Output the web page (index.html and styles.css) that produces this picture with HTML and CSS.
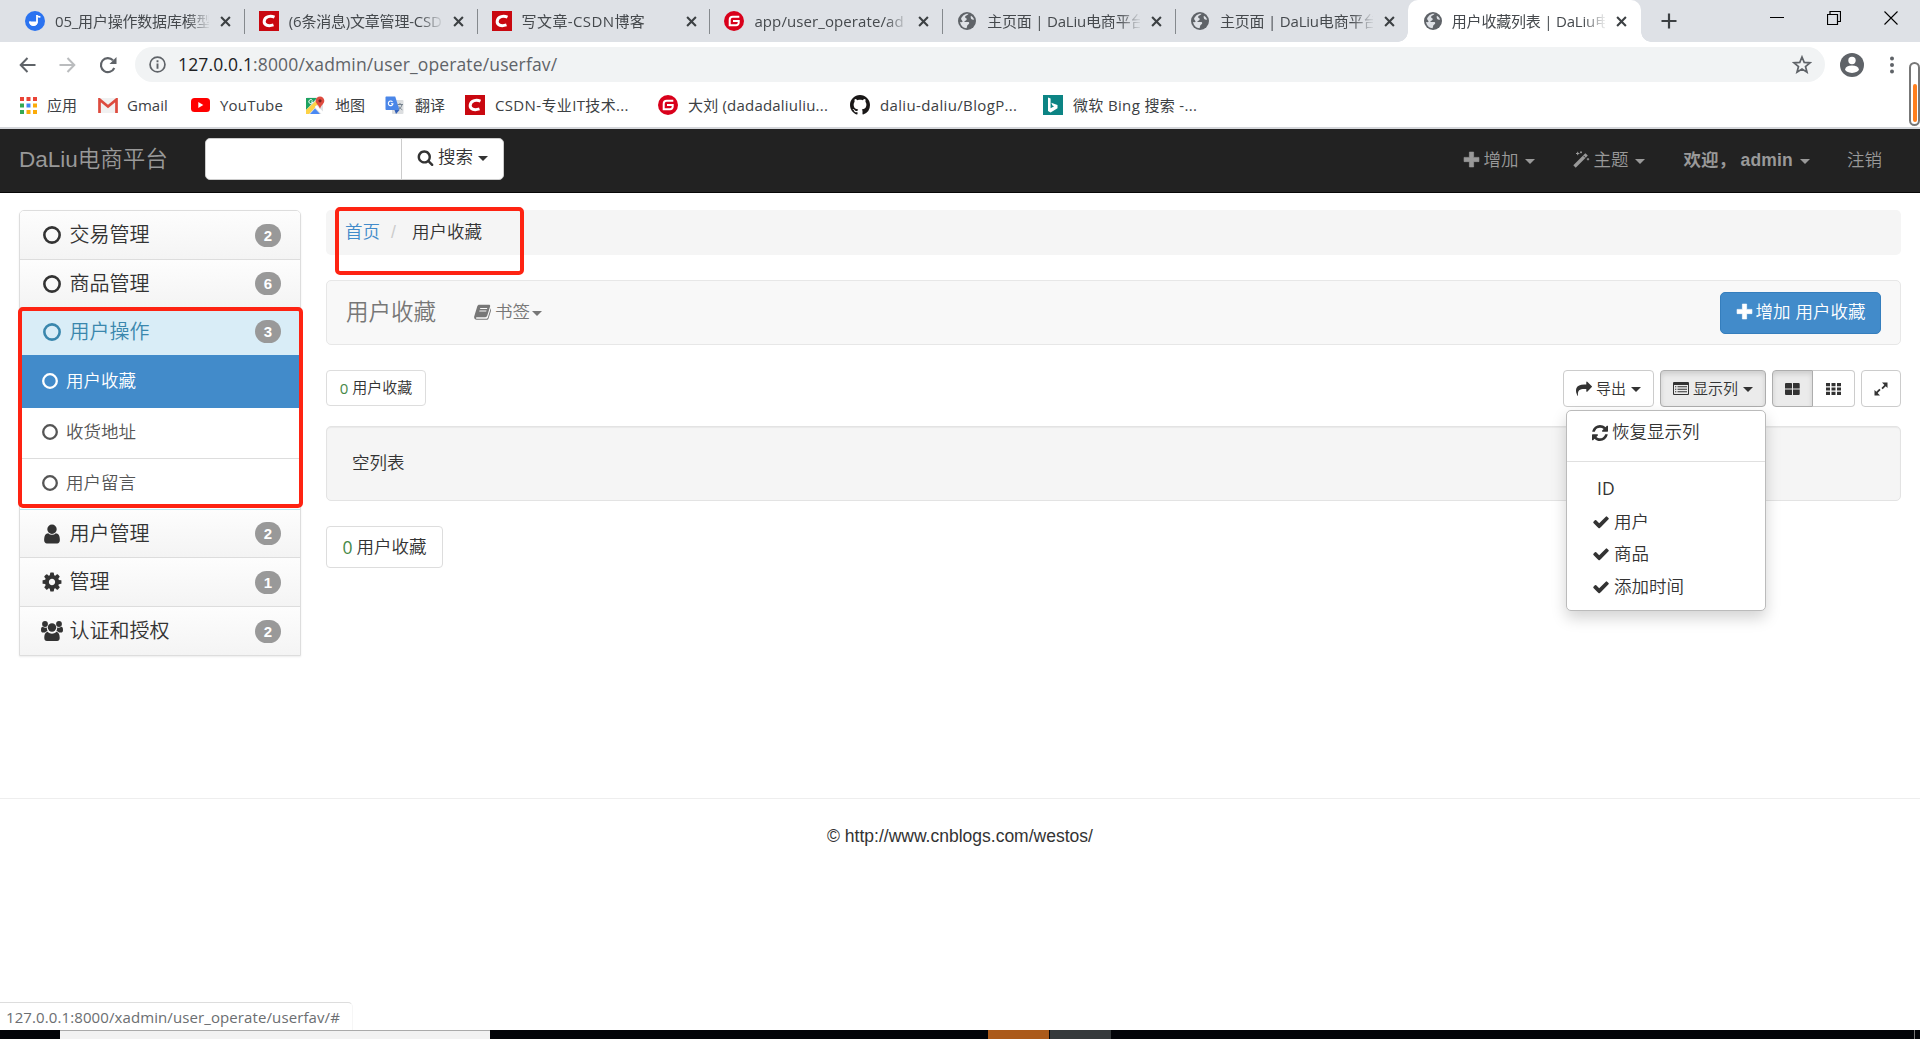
FILE: index.html
```html
<!DOCTYPE html>
<html lang="zh-CN">
<head>
<meta charset="utf-8">
<title>用户收藏列表 | DaLiu电商平台</title>
<link rel="stylesheet" href="styles.css">
</head>
<body>
<svg class="defs" width="0" height="0">
  <symbol id="x" viewBox="0 0 10 10"><path d="M1 1l8 8M9 1L1 9" stroke="#3c4043" stroke-width="1.9"/></symbol>
  <symbol id="note" viewBox="0 0 20 20"><circle cx="10" cy="10" r="10" fill="#2b73f0"/><path d="M11.2 4c1.2.8 3 1 4.200.900v1.800c-1 .2-2 0-2.700-.400" fill="#fff"/><path d="M12 4v6.500a3.600 3.600 0 1 1-7.200 0" fill="none" stroke="#fff" stroke-width="1.800"/><path d="M4.500 10.500h8.400a4.200 4.200 0 0 1-8.400 0z" fill="#fff"/></symbol>
  <symbol id="csdn" viewBox="0 0 20 20"><path d="M0 0h20v20H0z" fill="#c90810"/><path d="M15.500 6.200C12 4.700 5.800 4.800 5.200 10.200c-.4 4.300 4.300 5.300 9.300 3.700" fill="none" stroke="#fff" stroke-width="3"/></symbol>
  <symbol id="gitee" viewBox="0 0 20 20"><circle cx="10" cy="10" r="10" fill="#d9001b"/><path d="M15.300 5.700H8.700a3 3 0 0 0-3 3v5.600h6.500a2.500 2.500 0 0 0 2.500-2.500v-1.700H9" fill="none" stroke="#fff" stroke-width="2"/></symbol>
  <symbol id="globe" viewBox="0 0 20 20"><circle cx="10" cy="10" r="9" fill="#5f6368"/><path d="M11.500 2.800c-.5 1.700-3.800 1.600-3.300 3.700.3 1 2 .5 1.500 2-.5 1.300-2.200 1-2.500 2.500h3.500c2.300 0 1.600 2 .5 2.500-1.500.8-.7 2.200-1.700 3.700-3 0-6-2.700-6.400-6.200.8 0 1.800.5 2.600-.5L4 8C5 5 8 2.300 11.500 2.800zM14 4.800c1.300.7 2.500 2 3 3.700-1.500.8-2.800-.3-3.200-1.500-.3-1-.2-1.600.2-2.200z" fill="#dee1e6"/></symbol>
  <symbol id="github" viewBox="0 0 16 16"><path fill="#191717" d="M8 0C3.580 0 0 3.580 0 8c0 3.540 2.290 6.530 5.470 7.590.4.070.550-.170.550-.380 0-.190-.010-.820-.010-1.490-2.010.370-2.530-.490-2.690-.940-.090-.230-.480-.940-.820-1.130-.280-.150-.680-.520-.010-.530.630-.010 1.080.580 1.230.820.720 1.210 1.870.870 2.330.660.070-.520.280-.870.510-1.070-1.780-.200-3.640-.890-3.640-3.950 0-.870.310-1.590.820-2.150-.080-.200-.360-1.020.080-2.120 0 0 .670-.210 2.200.820.640-.180 1.320-.270 2-.270s1.360.090 2 .270c1.530-1.040 2.200-.820 2.200-.820.440 1.100.160 1.920.080 2.120.510.560.820 1.270.820 2.150 0 3.070-1.870 3.750-3.650 3.950.290.250.540.730.540 1.480 0 1.070-.010 1.930-.010 2.200 0 .210.150.460.550.380A8.010 8.010 0 0 0 16 8c0-4.420-3.580-8-8-8z"/></symbol>
  <symbol id="bing" viewBox="0 0 20 20"><path d="M0 0h20v20H0z" fill="#0c8484"/><path d="M5 2.500l2.600 1v9.800l3.500-2-1.700-.8-1.100-2.700 6.200 2.200v3.200L7.600 17.500 5 16z" fill="#fff"/></symbol>
  <symbol id="caret" viewBox="0 0 10 5"><path d="M0 0h10L5 5z" fill="currentColor"/></symbol>
  <symbol id="ring" viewBox="0 0 16 16"><circle cx="8" cy="8" r="6.800" fill="none" stroke="currentColor" stroke-width="2.300"/></symbol>
  <symbol id="plus" viewBox="0 0 16 16"><path d="M6 1h4v5h5v4h-5v5H6v-5H1V6h5z" fill="currentColor" stroke="currentColor" stroke-width=".6" stroke-linejoin="round"/></symbol>
  <symbol id="search" viewBox="0 0 1792 1792"><path fill="currentColor" d="M1216 832q0-185-131.500-316.500t-316.500-131.500-316.500 131.500-131.500 316.500 131.500 316.500 316.500 131.500 316.500-131.500 131.500-316.500zm512 832q0 52-38 90t-90 38q-54 0-90-38l-343-342q-179 124-399 124-143 0-273.500-55.500t-225-150-150-225-55.500-273.500 55.500-273.500 150-225 225-150 273.500-55.500 273.500 55.500 225 150 150 225 55.500 273.500q0 220-124 399l343 343q37 37 37 90z"/></symbol>
  <symbol id="user" viewBox="0 0 1792 1792"><path fill="currentColor" d="M1536 1399q0 109-62.500 187t-150.500 78h-854q-88 0-150.500-78t-62.500-187q0-85 8.500-160.500t31.500-152 58.500-131 94-89 134.500-34.500q131 128 313 128t313-128q76 0 134.500 34.500t94 89 58.500 131 31.500 152 8.500 160.500zm-256-887q0 159-112.500 271.500t-271.500 112.500-271.500-112.500-112.500-271.500 112.500-271.500 271.500-112.500 271.500 112.500 112.500 271.500z"/></symbol>
  <symbol id="cog" viewBox="0 0 1792 1792"><path fill="currentColor" d="M1152 896q0-106-75-181t-181-75-181 75-75 181 75 181 181 75 181-75 75-181zm512-109v222q0 12-8 23t-20 13l-185 28q-19 54-39 91 35 50 107 138 10 12 10 25t-9 23q-27 37-99 108t-94 71q-12 0-26-9l-138-108q-44 23-91 38-16 136-29 186-7 28-36 28h-222q-14 0-24.500-8.500t-11.500-21.500l-28-184q-49-16-90-37l-141 107q-10 9-25 9-14 0-25-11-126-114-165-168-7-10-7-23 0-12 8-23 15-21 51-66.500t54-70.500q-27-50-41-99l-183-27q-13-2-21-12.500t-8-23.500v-222q0-12 8-23t19-13l186-28q14-46 39-92-40-57-107-138-10-12-10-24 0-10 9-23 26-36 98.500-107.500t94.500-71.500q13 0 26 10l138 107q44-23 91-38 16-136 29-186 7-28 36-28h222q14 0 24.500 8.500t11.500 21.500l28 184q49 16 90 37l142-107q9-9 24-9 13 0 25 10 129 119 165 170 7 8 7 22 0 12-8 23-15 21-51 66.500t-54 70.500q26 50 41 98l183 28q13 2 21 12.500t8 23.500z"/></symbol>
  <symbol id="group" viewBox="0 0 22 22"><g fill="currentColor"><circle cx="4" cy="4" r="2.900"/><circle cx="18" cy="4" r="2.900"/><circle cx="11" cy="7.500" r="4.200"/><path d="M0 10c0-2 .6-3.200 1.700-3.200 1.500 1 3 1.200 4.200.6-.2 1.800.3 3 1 3.900-1.300 0-2.200.5-2.900 1.300H2C.8 12.600 0 11.800 0 10zM22 10c0-2-.6-3.200-1.700-3.200-1.500 1-3 1.200-4.200.6.2 1.800-.3 3-1 3.900 1.300 0 2.200.5 2.900 1.300h2c1.200 0 2-.8 2-2.600zM3.300 18c0-3.500 1-6 3.500-6 2.500 2.200 5.900 2.200 8.400 0 2.500 0 3.500 2.500 3.500 6 0 2-1 3-2.600 3H5.900c-1.600 0-2.600-1-2.600-3z"/></g></symbol>
  <symbol id="check" viewBox="0 0 1792 1792"><path fill="currentColor" d="M1671 566q0 40-28 68l-724 724-136 136q-28 28-68 28t-68-28l-136-136-362-362q-28-28-28-68t28-68l136-136q28-28 68-28t68 28l294 295 656-657q28-28 68-28t68 28l136 136q28 28 28 68z"/></symbol>
  <symbol id="refresh" viewBox="128 128 1536 1536"><path fill="currentColor" d="M1639 1056q0 5-1 7-64 268-268 434.500t-478 166.500q-146 0-282.500-55t-243.500-157l-129 129q-19 19-45 19t-45-19-19-45v-448q0-26 19-45t45-19h448q26 0 45 19t19 45-19 45l-137 137q71 66 161 102t187 36q134 0 250-65t186-179q11-17 53-117 8-23 30-23h192q13 0 22.500 9.500t9.500 22.500zm25-800v448q0 26-19 45t-45 19h-448q-26 0-45-19t-19-45 19-45l138-138q-148-137-349-137-134 0-250 65t-186 179q-11 17-53 117-8 23-30 23h-199q-13 0-22.500-9.500t-9.500-22.500v-7q65-268 270-434.500t480-166.500q146 0 284 55.500t245 156.500l130-129q19-19 45-19t45 19 19 45z"/></symbol>
  <symbol id="share" viewBox="0 0 1792 1792"><path fill="currentColor" d="M1792 640q0 26-19 45l-512 512q-19 19-45 19t-45-19-19-45v-256h-224q-98 0-175.500 6t-154 21.500-133 42.500-105.500 69.500-80 101-48.500 138.500-17.500 181q0 55 5 123 0 6 2.500 23.500t2.500 26.500q0 15-8.500 25t-23.500 10q-16 0-28-17-7-9-13-22t-13.500-30-10.500-24q-127-285-127-451 0-199 53-333 162-403 875-403h224v-256q0-26 19-45t45-19 45 19l512 512q19 19 19 45z"/></symbol>
  <symbol id="magic" viewBox="0 0 17 17"><path d="M1.500 15.500L12 5l1.600-1.600" stroke="currentColor" stroke-width="3.400" fill="none"/><path d="M10.500 4.800l1.800 1.800" stroke="#222" stroke-width=".9"/><path d="M3 2.500h3.400M4.700.8v3.400M8 .3v2M7 1.300h2M15 7v2.400M13.800 8.200h2.400" stroke="currentColor" stroke-width="1"/></symbol>
  <symbol id="book" viewBox="0 0 17 16"><path fill="currentColor" fill-rule="evenodd" d="M5.300.7h9.600c1 0 1.500.8 1.200 1.800l-2.900 9.300c-.3.900-1 1.400-1.900 1.400H3c-.8 0-1.300.4-1 1 .2.500.6.600 1.200.6h8.900c.9 0 1.500-.3 1.800-1.200l2.800-9.200c.8.500.7 1.300.4 2.100l-2.500 7.700c-.3 1-1.100 1.500-2 1.500H2.700C1 15.700-.2 14.200.2 12.600L3.300 2.300C3.600 1.300 4.300.7 5.300.700zM6.300 4l-.3.900h7l.3-.9zM5.500 6.600l-.3.900h7l.3-.9z"/></symbol>
  <symbol id="list" viewBox="0 0 16 13"><path fill="currentColor" fill-rule="evenodd" d="M1.300 0h13.400C15.500 0 16 .5 16 1.300v10.400c0 .8-.5 1.300-1.300 1.300H1.300C.5 13 0 12.500 0 11.700V1.300C0 .5.500 0 1.300 0zM1 3v8.500c0 .3.200.5.500.5h13c.3 0 .5-.2.500-.5V3z"/><path d="M2 4.700h1.300M2 7.200h1.300M2 9.700h1.300M4.500 4.700H14M4.500 7.200H14M4.500 9.700H14" stroke="currentColor" stroke-width="1.100"/></symbol>
  <symbol id="large" viewBox="0 0 15 12"><path fill="currentColor" d="M1 0h5.200q.8 0 .8.800V5.500H0V1q0-1 1-1zM8 0h5.700q1 0 1 1v4.500H8zM0 6.500h7V12H1q-1 0-1-1zM8 6.500h6.700V11q0 1-1 1H8z"/></symbol>
  <symbol id="th" viewBox="0 0 15 12"><path fill="currentColor" d="M0 0h4v3.200H0zM5.500 0h4v3.200h-4zM11 0h4v3.200h-4zM0 4.400h4v3.200H0zM5.500 4.400h4v3.200h-4zM11 4.400h4v3.200h-4zM0 8.800h4V12H0zM5.500 8.800h4V12h-4zM11 8.800h4V12h-4z"/></symbol>
  <symbol id="expand" viewBox="0 0 14 14"><path fill="currentColor" d="M8 .5h5.500V6l-1.800-1.800-3 3-1.300-1.300 3-3zM6 13.500H.5V8l1.800 1.800 3-3 1.300 1.300-3 3z"/></symbol>
</svg>

<div class="tabs">
  <div class="tab"><svg class="fav"><use href="#note"/></svg><span class="title">05_用户操作数据库模型</span><svg class="close"><use href="#x"/></svg></div>
  <div class="tab"><svg class="fav"><use href="#csdn"/></svg><span class="title">(6条消息)文章管理-CSD</span><svg class="close"><use href="#x"/></svg></div>
  <div class="tab"><svg class="fav"><use href="#csdn"/></svg><span class="title blog">写文章-CSDN博客</span><svg class="close"><use href="#x"/></svg></div>
  <div class="tab"><svg class="fav"><use href="#gitee"/></svg><span class="title narrow">app/user_operate/ad</span><svg class="close"><use href="#x"/></svg></div>
  <div class="tab"><svg class="fav"><use href="#globe"/></svg><span class="title">主页面 | DaLiu电商平台</span><svg class="close"><use href="#x"/></svg></div>
  <div class="tab last"><svg class="fav"><use href="#globe"/></svg><span class="title">主页面 | DaLiu电商平台</span><svg class="close"><use href="#x"/></svg></div>
  <div class="tab active"><svg class="fav"><use href="#globe"/></svg><span class="title">用户收藏列表 | DaLiu电</span><svg class="close"><use href="#x"/></svg></div>
  <svg class="newtab" viewBox="0 0 16 16"><path d="M8 .5v15M.5 8h15" stroke="#3c4043" stroke-width="2.200"/></svg>
  <div class="winctl">
    <svg width="14" height="14"><path d="M0 6.500h14" stroke="#000"/></svg>
    <svg width="14" height="14"><path d="M.5 3.500h10v10H.5zM3 3V.500h10.500v10H11" fill="none" stroke="#000" stroke-width="1.200"/></svg>
    <svg width="14" height="14"><path d="M.5.500l13 13M13.500.500l-13 13" stroke="#000" stroke-width="1.100"/></svg>
  </div>
</div>

<div class="toolbar">
  <svg class="back" viewBox="0 0 16 16"><path d="M16 8H1.500M8 1L1.200 8 8 15" fill="none" stroke="#5f6368" stroke-width="2"/></svg>
  <svg class="fwd" viewBox="0 0 16 16"><path d="M0 8h14.500M8 1l6.800 7L8 15" fill="none" stroke="#babcbe" stroke-width="2"/></svg>
  <svg class="reload" viewBox="0 0 18 18"><path d="M15.300 12A7 7 0 1 1 14 4.300" fill="none" stroke="#5f6368" stroke-width="2.100"/><path d="M17.500 1v7h-7z" fill="#5f6368"/></svg>
  <div class="omnibox">
    <svg class="info" viewBox="0 0 16 16"><circle cx="8" cy="8" r="7" fill="none" stroke="#5f6368" stroke-width="1.600"/><path d="M8 7v5M8 4v1.800" stroke="#5f6368" stroke-width="1.800"/></svg>
    <span class="url"><b>127.0.0.1</b>:8000/xadmin/user_operate/userfav/</span>
    <svg class="star" viewBox="0 0 20 20"><path d="M10 2l2.200 5.400 5.800.4-4.500 3.700 1.500 5.700-5-3.100-5 3.100 1.500-5.700L2 7.800l5.800-.4z" fill="none" stroke="#5f6368" stroke-width="1.700"/></svg>
  </div>
  <svg class="avatar" viewBox="0 0 24 24"><circle cx="12" cy="12" r="12" fill="#5f6368"/><circle cx="12" cy="7.500" r="3.700" fill="#fff"/><ellipse cx="12" cy="16.200" rx="6.800" ry="3.700" fill="#fff"/></svg>
  <svg class="dots" viewBox="0 0 4 18"><g fill="#5f6368"><circle cx="2" cy="2.500" r="2"/><circle cx="2" cy="9" r="2"/><circle cx="2" cy="15.500" r="2"/></g></svg>
</div>

<div class="bookmarks">
  <div class="bm b1"><svg width="17" height="17" viewBox="0 0 17 17"><path d="M0 0h4v4H0zM6.500 0h4v4h-4zM13 0h4v4h-4z" fill="#ea4335"/><path d="M0 6.500h4v4H0z" fill="#34a853"/><path d="M6.500 6.500h4v4h-4z" fill="#4285f4"/><path d="M13 6.500h4v4h-4zM6.500 13h4v4h-4zM13 13h4v4h-4z" fill="#fbab09"/><path d="M0 13h4v4H0z" fill="#34a853"/></svg><span>应用</span></div>
  <div class="bm b2"><svg width="20" height="15" viewBox="0 0 20 15"><path d="M1 0h18v15H1z" fill="#f1f1f1"/><path d="M1.500 15V1.500L10 8.500l8.500-7V15" fill="none" stroke="#dd4b3e" stroke-width="2.700"/></svg><span>Gmail</span></div>
  <div class="bm b3"><svg width="19" height="14" viewBox="0 0 19 14"><rect width="19" height="14" rx="3.500" fill="red"/><path d="M7.300 4l5 3-5 3z" fill="#fff"/></svg><span class="wide">YouTube</span></div>
  <div class="bm b4"><svg width="19" height="19" viewBox="0 0 19 19"><rect y="1.500" width="17" height="16.500" rx="1.500" fill="#e0e2e4"/><path d="M0 2h11L0 14z" fill="#1da261"/><path d="M0 14L12 3l2 3L3 18H0z" fill="#fdd246"/><path d="M4 18l5-5.500 5 5.500z" fill="#4a89f3"/><path d="M10.300 9.300L17 15.500V18h-1.500L8.800 11z" fill="#fff"/><path d="M14 .5a4.300 4.300 0 0 1 4.300 4.300c0 3-3 4-4.300 8-1.300-4-4.300-5-4.300-8A4.300 4.300 0 0 1 14 .5z" fill="#df4b3f"/><circle cx="14" cy="4.800" r="1.600" fill="#7b231e"/><path d="M6.500 4.500a2 2 0 1 0 .3 1.500H5" stroke="#fff" fill="none"/></svg><span>地图</span></div>
  <div class="bm b5"><svg width="19" height="19" viewBox="0 0 19 19"><rect x="7" y="4" width="11.500" height="14" rx="1" fill="#dcdee0"/><path d="M1.500.5h8.700L14.500 14H1.500C.7 14 .5 13.500.5 13V1.500c0-.6.4-1 1-1z" fill="#4a86e8"/><path d="M9.500 14h5L11 18z" fill="#3361b8"/><path d="M7.500 6a2.300 2.300 0 1 0 .4 1.800H6" stroke="#fff" stroke-width="1.100" fill="none"/><path d="M12.500 8.500H18M15 7v1.500M17 8.500c-.5 2.500-2 4-3.500 5M14 10.500c.6 1.300 2 2.600 3.300 3.300" stroke="#73808c" fill="none"/></svg><span>翻译</span></div>
  <div class="bm b6"><svg width="20" height="20"><use href="#csdn"/></svg><span class="wider">CSDN-专业IT技术...</span></div>
  <div class="bm b7"><svg width="20" height="20"><use href="#gitee"/></svg><span class="wide">大刘 (dadadaliuliu...</span></div>
  <div class="bm b8"><svg width="20" height="20"><use href="#github"/></svg><span class="wider">daliu-daliu/BlogP...</span></div>
  <div class="bm b9"><svg width="20" height="20"><use href="#bing"/></svg><span class="wider">微软 Bing 搜索 -...</span></div>
</div>

<nav class="navbar">
  <span class="brand">DaLiu电商平台</span>
  <div class="search"><span class="field"></span><span class="go"><svg width="17" height="17"><use href="#search"/></svg>搜索<svg class="caret"><use href="#caret"/></svg></span></div>
  <div class="menu">
    <span class="m1"><svg width="17" height="17"><use href="#plus"/></svg>增加<svg class="caret"><use href="#caret"/></svg></span>
    <span class="m2"><svg width="17" height="17"><use href="#magic"/></svg>主题<svg class="caret"><use href="#caret"/></svg></span>
    <span class="m3"><b>欢迎，</b><b class="name">admin</b><svg class="caret"><use href="#caret"/></svg></span>
    <span class="m4">注销</span>
  </div>
</nav>

<div class="page">
  <aside class="side">
    <div class="row"><svg><use href="#ring"/></svg><span>交易管理</span><i>2</i></div>
    <div class="row"><svg><use href="#ring"/></svg><span>商品管理</span><i>6</i></div>
    <div class="row open"><svg><use href="#ring"/></svg><span>用户操作</span><i>3</i></div>
    <div class="sub on"><svg><use href="#ring"/></svg><span>用户收藏</span></div>
    <div class="sub"><svg><use href="#ring"/></svg><span>收货地址</span></div>
    <div class="sub end"><svg><use href="#ring"/></svg><span>用户留言</span></div>
    <div class="row"><svg class="big"><use href="#user"/></svg><span>用户管理</span><i>2</i></div>
    <div class="row"><svg class="big"><use href="#cog"/></svg><span>管理</span><i>1</i></div>
    <div class="row"><svg class="big"><use href="#group"/></svg><span>认证和授权</span><i>2</i></div>
    <div class="mark mark-side"></div>
  </aside>
  <main>
    <div class="crumb"><a>首页</a><em>/</em><span>用户收藏</span><div class="mark mark-crumb"></div></div>
    <div class="head"><h1>用户收藏</h1><span class="bookmark"><svg width="17" height="16"><use href="#book"/></svg>书签<svg class="caret"><use href="#caret"/></svg></span><span class="add"><svg width="17" height="17"><use href="#plus"/></svg>增加 用户收藏</span></div>
    <div class="tools">
      <span class="btn count"><u>0</u>用户收藏</span>
      <span class="btn export"><svg width="16" height="16"><use href="#share"/></svg>导出<svg class="caret"><use href="#caret"/></svg></span>
      <span class="btn cols"><svg width="16" height="13"><use href="#list"/></svg>显示列<svg class="caret"><use href="#caret"/></svg>
        <div class="drop">
          <div class="restore"><svg width="16" height="16"><use href="#refresh"/></svg>恢复显示列</div>
          <div class="opt id">ID</div>
          <div class="opt"><svg width="18" height="18"><use href="#check"/></svg>用户</div>
          <div class="opt"><svg width="18" height="18"><use href="#check"/></svg>商品</div>
          <div class="opt"><svg width="18" height="18"><use href="#check"/></svg>添加时间</div>
        </div>
      </span>
      <span class="pair"><span class="btn l"><svg width="15" height="12"><use href="#large"/></svg></span><span class="btn r"><svg width="15" height="12"><use href="#th"/></svg></span></span>
      <span class="btn full"><svg width="14" height="14"><use href="#expand"/></svg></span>
    </div>
    <div class="well">空列表</div>
    <span class="btn total"><u>0</u>用户收藏</span>
  </main>
</div>
<footer>© http://www.cnblogs.com/westos/</footer>
<div class="taskbar"><span class="t1"></span><span class="t2"></span><span class="t3"></span><span class="clock">14:21</span><span class="t4"></span></div>
<div class="status">127.0.0.1:8000/xadmin/user_operate/userfav/#</div>
<div class="gauge"><span></span></div>
</body>
</html>
```
FILE: styles.css
```css
* { box-sizing: border-box; }
body {
  margin: 0; width: 1920px; height: 1039px; overflow: hidden; position: relative;
  display: flex; flex-direction: column; background: #fff; color: #333;
  font: 350 17.5px/24px "Liberation Sans", "Noto Sans CJK SC", sans-serif;
}
svg { display: block; flex: none; }
svg.defs { position: absolute; }
svg.caret { width: 10px; height: 5px; }

/* browser chrome */
.tabs, .toolbar, .bookmarks, .status { font-family: "Open Sans", "Noto Sans CJK SC", sans-serif; font-weight: 400; }
.tabs { height: 42px; flex: none; background: #dee1e6; display: flex; align-items: stretch; padding-left: 13px; }
.tab { width: 232.8px; flex: none; display: flex; align-items: center; padding-left: 12px; position: relative; font-size: 15px; color: #45494d; letter-spacing: -.2px; }
.tab:not(.active):not(.last)::after { content: ""; position: absolute; right: 1px; top: 9px; width: 1px; height: 25px; background: #85898d; }
.fav { width: 20px; height: 20px; }
.title { width: 154px; margin-left: 10px; white-space: nowrap; overflow: hidden; -webkit-mask-image: linear-gradient(90deg, #000 132px, transparent 156px); mask-image: linear-gradient(90deg, #000 132px, transparent 156px); }
.title.blog { letter-spacing: .4px; }
.title.narrow { letter-spacing: .1px; }
.tab:nth-child(n+2) .title { padding-left: 1px; }
.tab:nth-child(n+2) .fav { margin-left: 1px; margin-right: -1px; }
.close { width: 11px; height: 11px; margin-left: 11px; }
.tab.active { background: #fff; border-radius: 10px 10px 0 0; margin-left: -2px; padding-left: 14px; }
.tab.active .title { margin-left: 9px; }
.tab.active::before, .tab.active::after { content: ""; position: absolute; bottom: 0; width: 10px; height: 10px; }
.tab.active::before { left: -10px; background: radial-gradient(circle at 0 0, transparent 9.5px, #fff 10px); }
.tab.active::after { right: -10px; background: radial-gradient(circle at 100% 0, transparent 9.5px, #fff 10px); }
.newtab { width: 16px; height: 16px; margin: 13px 0 0 20px; }
.winctl { margin: 11px 22px 0 auto; display: flex; gap: 43px; }
.toolbar { height: 45px; flex: none; display: flex; align-items: center; padding-left: 19px; }
.back, .fwd { width: 17px; height: 16px; margin-right: 23px; }
.reload { width: 18px; height: 18px; margin-right: 18px; }
.omnibox { width: 1690px; height: 35px; border-radius: 18px; background: #f1f3f4; display: flex; align-items: center; padding: 0 13px 0 14px; }
.info { width: 17px; height: 17px; }
.url { margin: -2px 0 0 12px; font-size: 17.5px; letter-spacing: .14px; color: #5f6368; white-space: nowrap; }
.url b { font-weight: 400; color: #202124; }
.star { width: 20px; height: 20px; margin-left: auto; }
.avatar { width: 24px; height: 24px; margin-left: 15px; }
.dots { width: 4px; height: 18px; margin-left: 26px; }
.bookmarks { height: 42px; flex: none; border-bottom: 2px solid #d5d7db; display: grid; grid-template-columns: 78px 93px 115px 79px 80px 193px 192px 193px 200px; padding-left: 20px; font-size: 15px; color: #3c4043; padding-bottom: 4px; letter-spacing: 0; }
.bm { display: flex; align-items: center; gap: 10px; white-space: nowrap; }
.b2 { gap: 9px; }
.b5 { gap: 11px; }
.wide { letter-spacing: .2px; }
.wider { letter-spacing: .35px; }

/* site header */
.navbar { height: 64px; flex: none; background: #222; border-bottom: 1px solid #080808; display: flex; align-items: center; padding: 0 38px 2px 19px; color: #999; }
.brand { font-size: 22.5px; width: 186px; white-space: nowrap; }
.search { display: flex; width: 299px; height: 42px; margin-top: -2px; background: #fff; border-radius: 5px; color: #333; border: 1px solid #ccc; }
.field { width: 196px; border-right: 1px solid #ccc; }
.go { display: flex; align-items: center; padding: 0 0 3px 15px; }
.go svg:first-child { margin-right: 4px; }
.go .caret { margin-left: 5px; margin-top: 3px; }
.menu { margin-left: auto; display: flex; }
.menu span { display: flex; align-items: center; }
.menu .caret { margin-left: 7px; margin-top: 3px; }
.menu svg:first-child { margin-right: 3px; }
.m1 { margin-right: 38px; }
.m2 { margin-right: 38px; }
.m3 { margin-right: 37px; }
.menu b { font-weight: 700; width: 57px; }
.menu .name { width: auto; letter-spacing: .2px; }

/* body */
.page { display: flex; height: 588px; flex: none; padding: 17px 19px 0; gap: 25px; }
.side { width: 282px; height: 446px; flex: none; position: relative; border: 1px solid #ddd; border-radius: 5px 5px 0 0; box-shadow: 0 1px 2px rgba(0,0,0,.08); }
.row { height: 49px; display: flex; align-items: center; padding: 0 19px 0 23px; font-size: 20px; background: linear-gradient(#fdfdfd, #f4f4f4); border-bottom: 1px solid #ddd; }
.row:nth-child(1) { border-radius: 4px 4px 0 0; }
.row:nth-child(2), .row:nth-child(7) { height: 48px; }
.row:nth-child(9) { height: 48px; border: 0; }
.row svg { width: 18px; height: 18px; margin-right: 8.500px; }
.row svg.big { width: 22px; height: 22px; margin: 0 6.500px 0 -2px; }
.row i { margin-left: auto; width: 26px; height: 23px; border-radius: 12px; background: #999; color: #fff; font: bold 15px/23px "Liberation Sans", sans-serif; text-align: center; }
.row.open { height: 47px; color: #3a87ad; background: #d9edf7; border: 0; }
.sub { height: 51px; display: flex; align-items: center; padding: 0 0 3px 22px; color: #555; background: #fff; border-bottom: 1px solid #ddd; }
.sub svg { width: 16px; height: 16px; margin-right: 8px; }
.sub.on { height: 53px; padding-bottom: 2px; background: #428bca; color: #fff; border: 0; }
.sub.end { border-bottom: 1px solid #bce8f1; }
.mark { position: absolute; border: 4px solid #fe2312; border-radius: 5px; }
.mark-side { left: -2px; top: 96px; width: 285px; height: 201px; }
main { flex: 1; min-width: 0; display: flex; flex-direction: column; align-items: stretch; }
.crumb { position: relative; height: 45px; background: #f5f5f5; border-radius: 5px; display: flex; align-items: center; padding: 0 0 2px 19px; }
.crumb a { color: #428bca; }
.crumb em { color: #ccc; width: 32px; padding-left: 11px; font-style: normal; }
.mark-crumb { left: 9px; top: -3px; width: 189px; height: 68px; }
.head { margin-top: 25px; height: 65px; border: 1px solid #e7e7e7; border-radius: 5px; background: #f8f8f8; display: flex; align-items: center; color: #777; padding: 0 19px 0 19px; }
.head h1 { margin: 0; font-weight: inherit; font-size: 22.5px; width: 128px; }
.bookmark { display: flex; align-items: center; padding-bottom: 1px; }
.bookmark svg:first-child { margin-right: 4px; }
.bookmark .caret { margin: 3px 0 0 2px; }
.add { margin-left: auto; width: 161px; height: 42px; border: 1px solid #357ebd; border-radius: 5px; background: #428bca; color: #fff; display: flex; align-items: center; justify-content: center; padding-bottom: 2px; white-space: nowrap; }
.add svg { margin-right: 3px; }
.tools { margin-top: 25px; height: 37px; display: flex; gap: 6px; }
.btn { position: relative; display: flex; align-items: center; justify-content: center; border: 1px solid #ccc; border-radius: 4px; background: #fff; font-size: 15px; color: #333; white-space: nowrap; }
.btn u { text-decoration: none; color: #468847; font-family: "Open Sans", sans-serif; margin-right: 4px; font-weight: 400; }
.count { width: 100px; height: 36px; border-color: #ddd; margin-right: auto; }
.export { width: 91px; }
.cols { width: 106px; }
.export > svg:first-child, .cols > svg:first-child { margin-right: 4px; }
.btn > .caret { margin-left: 5px; margin-top: 1px; }
.cols, .btn.l { background: #ebebeb; border-color: #adadad; box-shadow: inset 0 3px 5px rgba(0,0,0,.125); }
.pair { display: flex; }
.btn.l { width: 41px; border-radius: 4px 0 0 4px; }
.btn.r { width: 42px; border-radius: 0 4px 4px 0; border-left: 0; }
.full { width: 40px; }
.well { margin-top: 19px; height: 75px; border: 1px solid #e3e3e3; border-radius: 5px; background: #f5f5f5; box-shadow: inset 0 1px 1px rgba(0,0,0,.05); display: flex; align-items: center; padding: 0 0 2px 25px; }
.total { margin-top: 25px; width: 117px; height: 42px; padding-bottom: 1px; font-size: 17.5px; border-color: #ddd; }
.drop { position: absolute; z-index: 2; right: -1px; top: 39px; width: 200px; height: 201px; background: #fff; border: 1px solid #bbb; border-radius: 5px; box-shadow: 0 7px 15px rgba(0,0,0,.175); font-size: 17.5px; }
.restore { height: 51px; border-bottom: 1px solid #e0e0e0; display: flex; padding: 9px 0 0 25px; }
.restore svg { margin: 5px 4px 0 0; }
.opt { height: 32.5px; display: flex; align-items: center; padding-left: 25px; }
.opt svg { margin-right: 4px; }
.opt.id { margin: 10px 0 1px; padding-left: 30px; font-family: "Open Sans", sans-serif; font-weight: 400; }
footer { margin-top: 17px; height: 232px; flex: none; border-top: 1px solid #eee; text-align: center; padding-top: 25px; font-weight: 400; }

/* desktop edge */
.taskbar { height: 9px; flex: none; background: #020408; display: flex; overflow: hidden; }
.t1 { margin-left: 60px; width: 430px; background: #f2f2f2; border-top: 1px solid #aaa; }
.t2 { margin-left: 498px; width: 61px; background: #ab5a1a; }
.t3 { margin-left: 1px; width: 61px; background: #35393b; }
.clock { margin: 2px 0 0 678px; width: 40px; color: #fff; font-size: 15px; }
.t4 { margin-left: 85px; width: 1px; background: #777; }
.status { position: absolute; left: -1px; top: 1002px; width: 354px; height: 28px; border: 1px solid #ddd; border-bottom: 0; border-right-color: #f6f6f6; border-radius: 0 5px 0 0; background: #fff; color: #6b6e71; font-size: 15px; line-height: 29px; letter-spacing: .1px; padding-left: 6px; white-space: nowrap; }
.gauge { position: absolute; left: 1909px; top: 62px; width: 11px; height: 64px; border: 2px solid #777; border-radius: 6px; background: #fff; }
.gauge span { display: block; width: 4px; height: 38px; margin: 20px auto 0; border-radius: 2px; background: #ff7f1e; }
```
